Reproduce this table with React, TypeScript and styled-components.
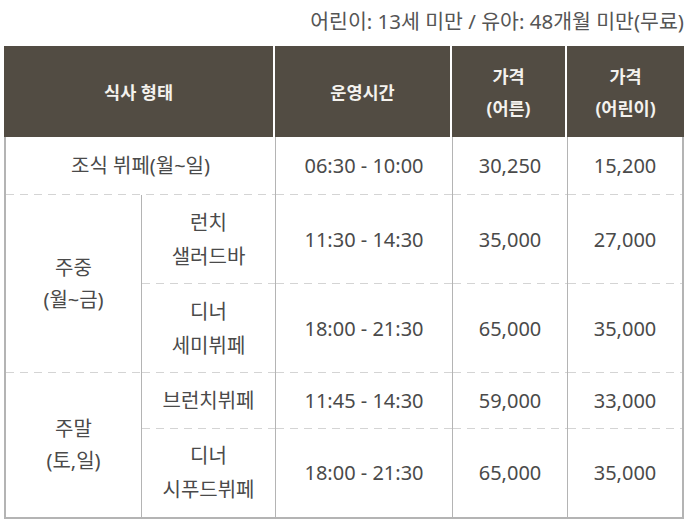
import React from "react";
import styled, { createGlobalStyle, css } from "styled-components";

const GlobalStyle = createGlobalStyle`
  html, body { margin: 0; padding: 0; background: #ffffff; }
  body {
    font-family: "Noto Sans", "Open Sans", "Noto Sans CJK KR", sans-serif;
    color: #4a4a4a;
  }
`;

const Page = styled.div`
  padding: 7px 10px 0 4px;
  box-sizing: border-box;
  width: 694px;
`;

const Caption = styled.p`
  margin: 0 0 10px 0;
  text-align: right;
  font-size: 20.5px;
  line-height: 29px;
  color: #555;
`;

const Table = styled.table`
  width: 100%;
  border-collapse: separate;
  border-spacing: 0;
  table-layout: fixed;
`;

const HeadCell = styled.th<{ $last?: boolean }>`
  background: #524c43;
  color: #f4f2ee;
  font-weight: 700;
  font-size: 17.5px;
  line-height: 32px;
  height: 91px;
  padding: 0;
  text-align: center;
  vertical-align: middle;
  border-right: ${(p) => (p.$last ? "0" : "2px solid #ffffff")};
  box-sizing: border-box;
`;

const dashedBottom = css`
  background-image: linear-gradient(to right, #d4d4d4 58%, transparent 58%);
  background-size: 14px 1px;
  background-repeat: repeat-x;
  background-position: left bottom;
`;

const Cell = styled.td<{
  $first?: boolean;
  $lastCol?: boolean;
  $lastRow?: boolean;
  $h?: number;
}>`
  padding: 0;
  text-align: center;
  vertical-align: middle;
  font-size: 20px;
  line-height: 34px;
  color: #4a4a4a;
  box-sizing: border-box;
  height: ${(p) => (p.$h ? `${p.$h}px` : "auto")};
  border-left: ${(p) => (p.$first ? "2px solid #b4b4b4" : "1px solid #b4b4b4")};
  border-right: ${(p) => (p.$lastCol ? "2px solid #b4b4b4" : "0")};
  border-bottom: ${(p) => (p.$lastRow ? "2px solid #b4b4b4" : "0")};
  ${(p) => (p.$lastRow ? "" : dashedBottom)}
`;

const Group = styled.span`
  display: block;
  line-height: 32px;
`;

const lines = (t: string) =>
  t.split("\n").map((l, i, arr) => (
    <React.Fragment key={i}>
      {l}
      {i < arr.length - 1 && <br />}
    </React.Fragment>
  ));

export default function App() {
  return (
    <>
      <GlobalStyle />
      <Page>
        <Caption>어린이: 13세 미만 / 유아: 48개월 미만(무료)</Caption>
        <Table>
          <colgroup>
            <col style={{ width: 137 }} />
            <col style={{ width: 134 }} />
            <col style={{ width: 177 }} />
            <col style={{ width: 115 }} />
            <col style={{ width: 117 }} />
          </colgroup>
          <thead>
            <tr>
              <HeadCell colSpan={2}>식사 형태</HeadCell>
              <HeadCell>운영시간</HeadCell>
              <HeadCell>
                가격
                <br />
                (어른)
              </HeadCell>
              <HeadCell $last>
                가격
                <br />
                (어린이)
              </HeadCell>
            </tr>
          </thead>
          <tbody>
            <tr>
              <Cell colSpan={2} $first $h={58}>
                조식 뷔페(월~일)
              </Cell>
              <Cell>06:30 - 10:00</Cell>
              <Cell>30,250</Cell>
              <Cell $lastCol>15,200</Cell>
            </tr>
            <tr>
              <Cell rowSpan={2} $first>
                <Group>{lines("주중\n(월~금)")}</Group>
              </Cell>
              <Cell $h={89}>{lines("런치\n샐러드바")}</Cell>
              <Cell>11:30 - 14:30</Cell>
              <Cell>35,000</Cell>
              <Cell $lastCol>27,000</Cell>
            </tr>
            <tr>
              <Cell $h={89}>{lines("디너\n세미뷔페")}</Cell>
              <Cell>18:00 - 21:30</Cell>
              <Cell>65,000</Cell>
              <Cell $lastCol>35,000</Cell>
            </tr>
            <tr>
              <Cell rowSpan={2} $first $lastRow>
                <Group>{lines("주말\n(토,일)")}</Group>
              </Cell>
              <Cell $h={56}>브런치뷔페</Cell>
              <Cell>11:45 - 14:30</Cell>
              <Cell>59,000</Cell>
              <Cell $lastCol>33,000</Cell>
            </tr>
            <tr>
              <Cell $h={90} $lastRow>
                {lines("디너\n시푸드뷔페")}
              </Cell>
              <Cell $lastRow>18:00 - 21:30</Cell>
              <Cell $lastRow>65,000</Cell>
              <Cell $lastRow $lastCol>
                35,000
              </Cell>
            </tr>
          </tbody>
        </Table>
      </Page>
    </>
  );
}
